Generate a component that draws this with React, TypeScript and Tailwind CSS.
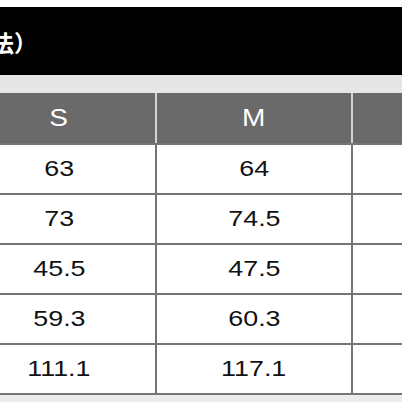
import React from "react";

const rows = [
  ["63", "64"],
  ["73", "74.5"],
  ["45.5", "47.5"],
  ["59.3", "60.3"],
  ["111.1", "117.1"],
];

function T({ children }: { children: React.ReactNode }) {
  return <span className="inline-block scale-x-[1.22] leading-none">{children}</span>;
}

export default function App() {
  const font = { fontFamily: '"Liberation Sans", Arial, sans-serif' };
  return (
    <div className="w-[402px] h-[402px] overflow-hidden bg-white flex flex-col" style={font}>
      <div className="h-[7px] bg-white shrink-0" />
      <div className="h-[68px] bg-black shrink-0 flex items-center overflow-hidden">
        <span
          className="ml-[-9px] mt-[2px] text-white text-[23px] font-bold leading-none whitespace-nowrap"
          style={{ fontFamily: '"Noto Sans CJK JP", "Noto Sans CJK SC", sans-serif' }}
        >
          法）
        </span>
      </div>
      <div className="h-[18px] bg-[#e6e6e6] shrink-0" />
      <div className="ml-[-37px] w-[460px] flex flex-col">
        <div className="grid grid-cols-[194px_196px_1fr] h-[50px] bg-[#6a6a6a] text-white text-[23px]">
          <div className="flex items-center justify-center border-r-2 border-[#d4d4d4]"><T>S</T></div>
          <div className="flex items-center justify-center border-r-2 border-[#d4d4d4]"><T>M</T></div>
          <div />
        </div>
        {rows.map((r, i) => (
          <div
            key={i}
            className="grid grid-cols-[194px_196px_1fr] h-[50px] border-t-2 border-[#757575] text-[#111] text-[22px]"
          >
            <div className="flex items-center justify-center border-r-2 border-[#757575]"><T>{r[0]}</T></div>
            <div className="flex items-center justify-center border-r-2 border-[#757575]"><T>{r[1]}</T></div>
            <div />
          </div>
        ))}
        <div className="h-[2px] bg-[#757575]" />
      </div>
      <div className="h-[7px] bg-[#ececec] shrink-0" />
      <div className="flex-1 bg-[#222]" />
    </div>
  );
}
